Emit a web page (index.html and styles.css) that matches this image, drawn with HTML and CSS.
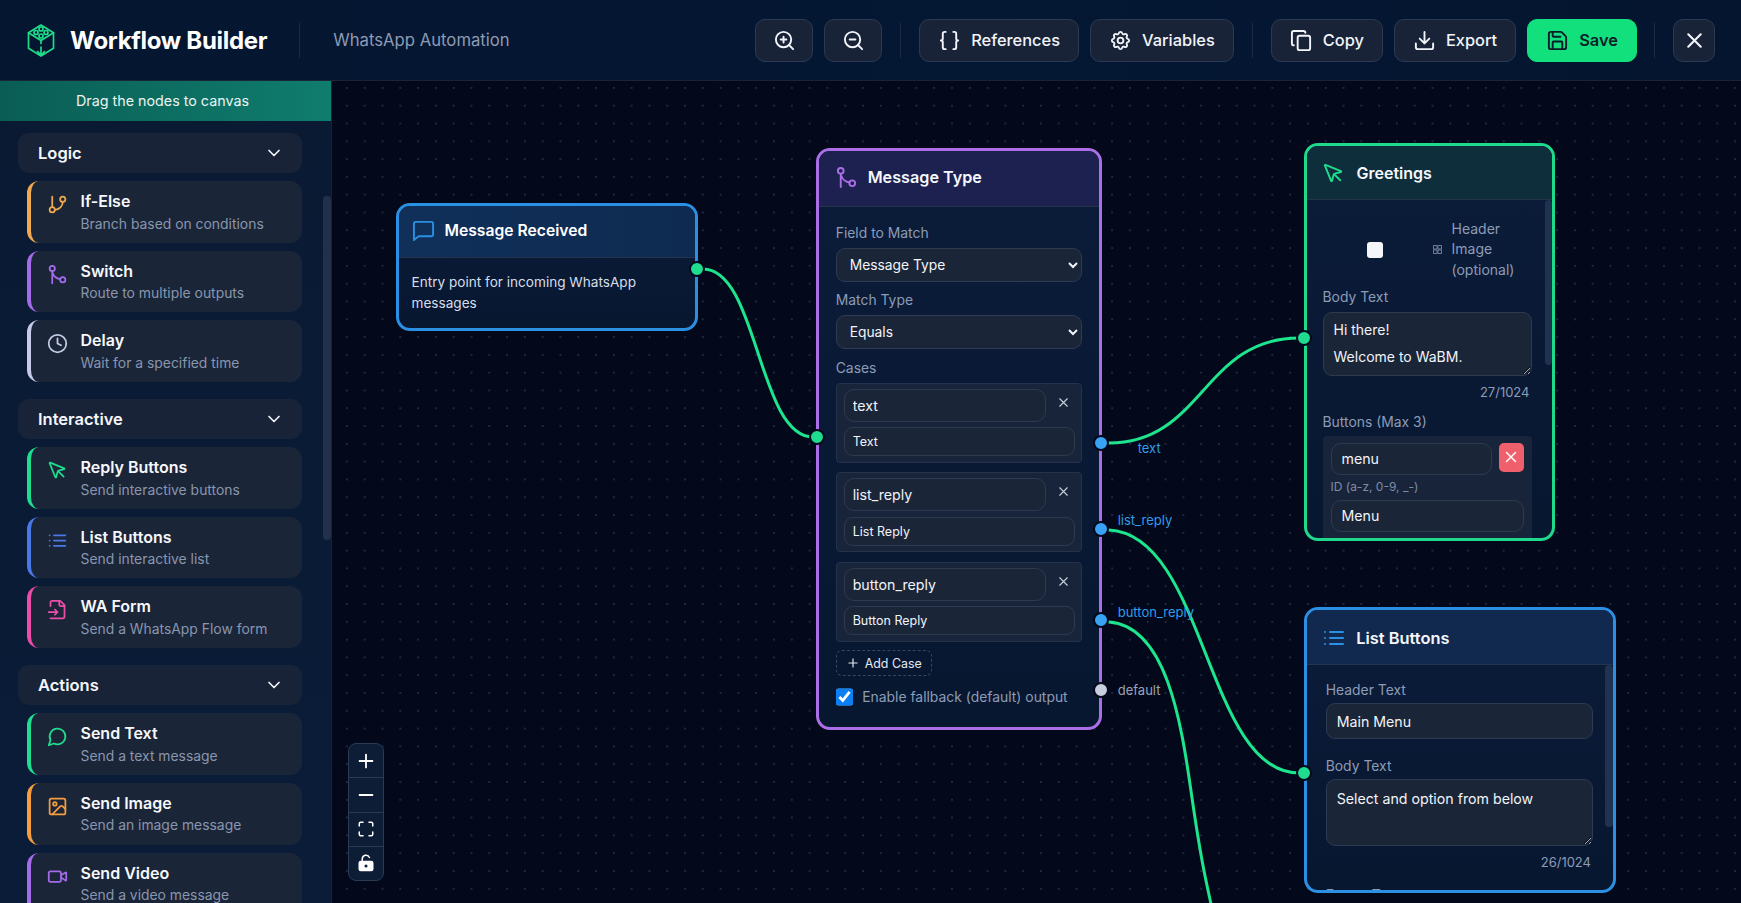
FILE: index.html
```html
<!DOCTYPE html>
<html lang="en">
<head>
  <meta charset="UTF-8">
  <meta name="viewport" content="width=device-width, initial-scale=1.0">
  <title>Workflow Builder</title>
  <link rel="stylesheet" href="styles.css">
</head>
<body>
  <svg class="sprite" xmlns="http://www.w3.org/2000/svg">
    <symbol id="i-zoom-in" viewBox="0 0 24 24"><circle cx="11" cy="11" r="8"/><path d="M21 21l-4.35-4.35M11 8v6M8 11h6"/></symbol>
    <symbol id="i-zoom-out" viewBox="0 0 24 24"><circle cx="11" cy="11" r="8"/><path d="M21 21l-4.35-4.35M8 11h6"/></symbol>
    <symbol id="i-braces" viewBox="0 0 24 24"><path d="M8 3H7a2 2 0 0 0-2 2v5a2 2 0 0 1-2 2 2 2 0 0 1 2 2v5c0 1.1.9 2 2 2h1"/><path d="M16 21h1a2 2 0 0 0 2-2v-5c0-1.1.9-2 2-2a2 2 0 0 1-2-2V5a2 2 0 0 0-2-2h-1"/></symbol>
    <symbol id="i-gear" viewBox="0 0 24 24"><path d="M10.325 4.317c.426-1.756 2.924-1.756 3.35 0a1.724 1.724 0 0 0 2.573 1.066c1.543-.94 3.31.826 2.37 2.37a1.724 1.724 0 0 0 1.065 2.572c1.756.426 1.756 2.924 0 3.35a1.724 1.724 0 0 0-1.066 2.573c.94 1.543-.826 3.31-2.37 2.37a1.724 1.724 0 0 0-2.572 1.065c-.426 1.756-2.924 1.756-3.35 0a1.724 1.724 0 0 0-2.573-1.066c-1.543.94-3.31-.826-2.37-2.37a1.724 1.724 0 0 0-1.065-2.572c-1.756-.426-1.756-2.924 0-3.35a1.724 1.724 0 0 0 1.066-2.573c-.94-1.543.826-3.31 2.37-2.37 1 .608 2.296.07 2.572-1.065z"/><circle cx="12" cy="12" r="3"/></symbol>
    <symbol id="i-copy" viewBox="0 0 24 24"><rect x="8" y="7" width="13" height="15" rx="2"/><path d="M4 17c-1.1 0-2-.9-2-2V4c0-1.1.9-2 2-2h10c1.1 0 2 .9 2 2"/></symbol>
    <symbol id="i-download" viewBox="0 0 24 24"><path d="M21 15v4a2 2 0 0 1-2 2H5a2 2 0 0 1-2-2v-4M7 10l5 5 5-5M12 15V3"/></symbol>
    <symbol id="i-save" viewBox="0 0 24 24"><path d="M15.2 3a2 2 0 0 1 1.4.6l3.8 3.8a2 2 0 0 1 .6 1.4V19a2 2 0 0 1-2 2H5a2 2 0 0 1-2-2V5a2 2 0 0 1 2-2z"/><path d="M17 21v-7a1 1 0 0 0-1-1H8a1 1 0 0 0-1 1v7M7 3v4a1 1 0 0 0 1 1h7"/></symbol>
    <symbol id="i-x" viewBox="0 0 24 24"><path d="M18 6 6 18M6 6l12 12"/></symbol>
    <symbol id="i-chevron" viewBox="0 0 24 24"><path d="m6 9 6 6 6-6"/></symbol>
    <symbol id="i-branch" viewBox="0 0 24 24"><path d="M6 3v12"/><circle cx="18" cy="6" r="3"/><circle cx="6" cy="18" r="3"/><path d="M18 9a9 9 0 0 1-9 9"/></symbol>
    <symbol id="i-switch" viewBox="0 0 24 24"><circle cx="6" cy="5" r="3"/><circle cx="18" cy="18" r="3"/><path d="M6 8v14M6.400 10c1 3.400 4.600 6.600 8.700 7.200"/></symbol>
    <symbol id="i-clock" viewBox="0 0 24 24"><circle cx="12" cy="12" r="10"/><path d="M12 6v6l4 2"/></symbol>
    <symbol id="i-pointer" viewBox="0 0 24 24"><path d="M12.586 12.586 19 19"/><path d="M3.688 3.037a.497.497 0 0 0-.651.651l6.5 15.999a.5.5 0 0 0 .947-.062l1.569-6.083a2 2 0 0 1 1.448-1.479l6.124-1.579a.5.5 0 0 0 .063-.947z"/></symbol>
    <symbol id="i-list" viewBox="0 0 24 24"><path d="M3 12h.01M3 18h.01M3 6h.01M8 12h13M8 18h13M8 6h13"/></symbol>
    <symbol id="i-form" viewBox="0 0 24 24"><path d="M4 22h14a2 2 0 0 0 2-2V7l-5-5H6a2 2 0 0 0-2 2v4"/><path d="M14 2v4a2 2 0 0 0 2 2h4M2 15h10M9 18l3-3-3-3"/></symbol>
    <symbol id="i-bubble" viewBox="0 0 24 24"><path d="M7.900 20A9 9 0 1 0 4 16.100L2 22Z"/></symbol>
    <symbol id="i-image" viewBox="0 0 24 24"><rect x="3" y="3" width="18" height="18" rx="2"/><circle cx="9" cy="9" r="2"/><path d="m21 15-3.086-3.086a2 2 0 0 0-2.828 0L6 21"/></symbol>
    <symbol id="i-video" viewBox="0 0 24 24"><path d="m16 13 5.223 3.482a.5.5 0 0 0 .777-.416V7.870a.5.5 0 0 0-.752-.432L16 10.500"/><rect x="2" y="6" width="14" height="12" rx="2"/></symbol>
    <symbol id="i-message" viewBox="0 0 24 24"><path d="M22 16a2 2 0 0 1-2 2H7l-5 4V5a2 2 0 0 1 2-2h16a2 2 0 0 1 2 2z"/></symbol>
    <symbol id="i-plus" viewBox="0 0 24 24"><path d="M5 12h14M12 5v14"/></symbol>
    <symbol id="i-minus" viewBox="0 0 24 24"><path d="M5 12h14"/></symbol>
    <symbol id="i-fit" viewBox="0 0 24 24"><path d="M8 3H5a2 2 0 0 0-2 2v3M21 8V5a2 2 0 0 0-2-2h-3M3 16v3a2 2 0 0 0 2 2h3M16 21h3a2 2 0 0 0 2-2v-3"/></symbol>
  </svg>

  <header class="topbar">
    <div class="brand">
      <svg class="logo" viewBox="0 0 28 33" fill="none" stroke="#1fdc8a" stroke-width="1.700" stroke-linejoin="round" stroke-linecap="round">
        <path d="M14 1l12.500 7.800L14 16.500 1.500 8.800z"/>
        <circle cx="14" cy="5" r="2"/><circle cx="9" cy="8.500" r="2"/><circle cx="19" cy="8.500" r="2"/><circle cx="14" cy="12" r="2"/>
        <path d="M1.500 8.800v15.400L14 32l12.500-7.800V8.800M14 16.500v3M14 23v9M10.500 27.500L14 31l3.500-3.500"/>
      </svg>
      <h1>Workflow Builder</h1>
    </div>
    <span class="bar-sep"></span>
    <span class="subtitle">WhatsApp Automation</span>
    <div class="actions">
      <button class="tool icon-only"><svg class="ico"><use href="#i-zoom-in"/></svg></button>
      <button class="tool icon-only"><svg class="ico"><use href="#i-zoom-out"/></svg></button>
      <span class="bar-sep"></span>
      <button class="tool"><svg class="ico"><use href="#i-braces"/></svg>References</button>
      <button class="tool"><svg class="ico"><use href="#i-gear"/></svg>Variables</button>
      <span class="bar-sep"></span>
      <button class="tool"><svg class="ico"><use href="#i-copy"/></svg>Copy</button>
      <button class="tool"><svg class="ico"><use href="#i-download"/></svg>Export</button>
      <button class="tool save"><svg class="ico"><use href="#i-save"/></svg>Save</button>
      <span class="bar-sep"></span>
      <button class="tool close"><svg class="ico"><use href="#i-x"/></svg></button>
    </div>
  </header>

  <main class="workspace">
    <aside class="sidebar">
      <div class="hint">Drag the nodes to canvas</div>
      <div class="palette">
        <section class="group">
          <div class="group-head">Logic<svg class="ico chev"><use href="#i-chevron"/></svg></div>
          <div class="item amber"><svg class="ico"><use href="#i-branch"/></svg><div><b>If-Else</b><small>Branch based on conditions</small></div></div>
          <div class="item purple"><svg class="ico"><use href="#i-switch"/></svg><div><b>Switch</b><small>Route to multiple outputs</small></div></div>
          <div class="item grey"><svg class="ico"><use href="#i-clock"/></svg><div><b>Delay</b><small>Wait for a specified time</small></div></div>
        </section>
        <section class="group">
          <div class="group-head">Interactive<svg class="ico chev"><use href="#i-chevron"/></svg></div>
          <div class="item green"><svg class="ico"><use href="#i-pointer"/></svg><div><b>Reply Buttons</b><small>Send interactive buttons</small></div></div>
          <div class="item blue"><svg class="ico"><use href="#i-list"/></svg><div><b>List Buttons</b><small>Send interactive list</small></div></div>
          <div class="item pink"><svg class="ico"><use href="#i-form"/></svg><div><b>WA Form</b><small>Send a WhatsApp Flow form</small></div></div>
        </section>
        <section class="group">
          <div class="group-head">Actions<svg class="ico chev"><use href="#i-chevron"/></svg></div>
          <div class="item green"><svg class="ico"><use href="#i-bubble"/></svg><div><b>Send Text</b><small>Send a text message</small></div></div>
          <div class="item orange"><svg class="ico"><use href="#i-image"/></svg><div><b>Send Image</b><small>Send an image message</small></div></div>
          <div class="item purple"><svg class="ico"><use href="#i-video"/></svg><div><b>Send Video</b><small>Send a video message</small></div></div>
        </section>
      </div>
      <span class="side-thumb"></span>
    </aside>

    <div class="canvas">
      <svg class="edges" width="1410" height="823" viewBox="331 80 1410 823" fill="none" stroke="#1de58d" stroke-width="3" stroke-linecap="round">
        <path d="M702 268C757 268 757 436 812 436"/>
        <path d="M1108 442C1202 442 1202 337 1298 337"/>
        <path d="M1108 529C1205 534 1205 772 1298 772"/>
        <path d="M1108 621C1165 625 1180 720 1190 790S1205 880 1212 912"/>
      </svg>

      <div class="zoom-box">
        <button><svg class="ico"><use href="#i-plus"/></svg></button>
        <button><svg class="ico"><use href="#i-minus"/></svg></button>
        <button><svg class="ico small"><use href="#i-fit"/></svg></button>
        <button>
          <svg class="ico small" viewBox="0 0 24 24"><path class="solid" d="M5 10h14a2 2 0 0 1 2 2v8a2 2 0 0 1-2 2H5a2 2 0 0 1-2-2v-8a2 2 0 0 1 2-2z"/><path d="M7 10V6.500a5 5 0 0 1 9.600-1.800"/><circle class="hole" cx="12" cy="16" r="2"/></svg>
        </button>
      </div>

      <article class="node node-received">
        <div class="node-head"><svg class="ico"><use href="#i-message"/></svg>Message Received</div>
        <p class="node-text">Entry point for incoming WhatsApp messages</p>
        <span class="handle h-green h-out"></span>
      </article>

      <article class="node node-type">
        <div class="node-head"><svg class="ico"><use href="#i-switch"/></svg>Message Type</div>
        <div class="node-body">
          <label class="field-label">Field to Match</label>
          <select class="ctl"><option>Message Type</option></select>
          <label class="field-label next">Match Type</label>
          <select class="ctl"><option>Equals</option></select>
          <label class="field-label next">Cases</label>
          <div class="case">
            <div class="case-top"><input class="ctl key" value="text"><svg class="ico rm"><use href="#i-x"/></svg></div>
            <input class="ctl name" value="Text">
          </div>
          <div class="case">
            <div class="case-top"><input class="ctl key" value="list_reply"><svg class="ico rm"><use href="#i-x"/></svg></div>
            <input class="ctl name" value="List Reply">
          </div>
          <div class="case">
            <div class="case-top"><input class="ctl key" value="button_reply"><svg class="ico rm"><use href="#i-x"/></svg></div>
            <input class="ctl name" value="Button Reply">
          </div>
          <button class="add-case"><svg class="ico"><use href="#i-plus"/></svg>Add Case</button>
          <label class="fallback"><input type="checkbox" checked>Enable fallback (default) output</label>
        </div>
        <span class="handle h-green h-in in-type"></span>
        <span class="handle h-blue h-out out-text"></span>
        <span class="handle h-blue h-out out-list"></span>
        <span class="handle h-blue h-out out-button"></span>
        <span class="handle h-grey h-out out-default"></span>
        <span class="out-label l-text">text</span>
        <span class="out-label l-list">list_reply</span>
        <span class="out-label l-button">button_reply</span>
        <span class="out-label l-default">default</span>
      </article>

      <article class="node node-greet">
        <div class="node-head"><svg class="ico"><use href="#i-pointer"/></svg>Greetings</div>
        <div class="node-body">
          <div class="header-img">
            <span class="white-box"></span>
            <svg class="broken" viewBox="0 0 10 10"><path d="M.5.500h4v4h-4zM5.500.500h4v4h-4zM.5 5.500h4v4h-4zM5.500 5.500h4v4h-4z"/></svg>
            <span>Header Image (optional)</span>
          </div>
          <label class="field-label">Body Text</label>
          <textarea class="ctl area">Hi there!

Welcome to WaBM.</textarea>
          <div class="count">27/1024</div>
          <label class="field-label btns">Buttons (Max 3)</label>
          <div class="btn-case">
            <div class="case-top"><input class="ctl btn-id" value="menu"><button class="del"><svg class="ico"><use href="#i-x"/></svg></button></div>
            <div class="id-hint">ID (a-z, 0-9, _-)</div>
            <input class="ctl btn-name" value="Menu">
          </div>
        </div>
        <span class="node-thumb"></span>
        <span class="handle h-green h-in in-greet"></span>
      </article>

      <article class="node node-list">
        <div class="node-head"><svg class="ico"><use href="#i-list"/></svg>List Buttons</div>
        <div class="node-body">
          <label class="field-label">Header Text</label>
          <input class="ctl wide" value="Main Menu">
          <label class="field-label second">Body Text</label>
          <textarea class="ctl area tall">Select and option from below</textarea>
          <div class="count">26/1024</div>
          <label class="field-label cut">Footer Text</label>
        </div>
        <span class="node-thumb"></span>
        <span class="handle h-green h-in in-list"></span>
      </article>
    </div>
  </main>
</body>
</html>
```

FILE: styles.css
```css
* {
  box-sizing: border-box;
}
html, body {
  height: 100%;
}
body {
  margin: 0;
  overflow: hidden;
  display: flex;
  flex-direction: column;
  background: #03081a;
  color: #fff;
  font-family: Inter, "Noto Sans", sans-serif;
  color-scheme: dark;
}
.sprite {
  display: none;
}
.ico {
  width: 20px;
  height: 20px;
  flex: none;
  fill: none;
  stroke: currentColor;
  stroke-width: 2;
  stroke-linecap: round;
  stroke-linejoin: round;
}

/* top bar */
.topbar {
  height: 81px;
  flex: none;
  display: flex;
  align-items: center;
  padding: 0 26px 0 27px;
  background: linear-gradient(90deg, #051630, #041733 60%, #05152f);
  border-bottom: 1px solid #1a2638;
}
.brand {
  display: flex;
  align-items: center;
  gap: 15px;
}
.logo {
  width: 28px;
  height: 33px;
}
.brand h1 {
  margin: 0;
  padding-top: 1px;
  font-size: 24px;
  font-weight: 700;
  letter-spacing: -0.3px;
}
.bar-sep {
  width: 1px;
  height: 35px;
  background: #1d2b42;
  flex: none;
}
.brand + .bar-sep {
  margin: 0 33px 0 32px;
}
.subtitle {
  font-size: 16.700px;
  color: #8d9bb5;
}
.actions {
  margin-left: auto;
  display: flex;
  align-items: center;
  gap: 11px;
}
.actions .bar-sep {
  margin: 0 7px;
}
.actions .bar-sep:nth-last-child(2) {
  margin: 0 7px 0 6px;
}
.tool {
  height: 43px;
  display: flex;
  align-items: center;
  gap: 10px;
  padding: 0 18px;
  background: #182338;
  border: 1px solid #2b3a52;
  border-radius: 10px;
  color: #f1f4f9;
  font: 500 16.400px Inter, sans-serif;
}
.tool .ico {
  width: 23px;
  height: 23px;
}
.tool.icon-only {
  width: 58px;
  padding: 0;
  justify-content: center;
}
.tool.save {
  background: #12e07c;
  border-color: #12e07c;
  color: #0b1d2a;
  font-weight: 600;
}
.tool.close {
  width: 42px;
  padding: 0;
  justify-content: center;
}
.tool.close .ico {
  width: 25px;
  height: 25px;
}

/* sidebar */
.workspace {
  flex: 1;
  min-height: 0;
  display: flex;
}
.sidebar {
  position: relative;
  width: 332px;
  flex: none;
  overflow: hidden;
  background: linear-gradient(180deg, #0a1a33, #0a1c38);
  border-right: 1px solid #14233a;
}
.hint {
  height: 40px;
  display: flex;
  align-items: center;
  justify-content: center;
  padding: 0 6px 2px 0;
  background: linear-gradient(90deg, #0a5d54, #0f7d6e);
  font-size: 14.300px;
  color: #eaf3f2;
}
.palette {
  padding: 12px 29px 0 18px;
}
.side-thumb {
  position: absolute;
  top: 115px;
  right: 0;
  width: 8px;
  height: 344px;
  border-radius: 4px;
  background: #22304a;
}
.group {
  margin-bottom: 17px;
}
.group-head {
  height: 40px;
  display: flex;
  align-items: center;
  justify-content: space-between;
  padding: 0 18px 0 20px;
  border-radius: 11px;
  background: #182338;
  font-size: 16.500px;
  font-weight: 600;
  color: #f4f6fa;
}
.chev {
  width: 20px;
  height: 20px;
}
.item {
  height: 61.700px;
  margin: 8px 0 0 9px;
  display: flex;
  gap: 12.500px;
  padding: 11px 10px 0 16px;
  border-left: 4px solid;
  border-radius: 12px;
  background: #1b2538;
}
.item .ico {
  margin-top: 2px;
  width: 21px;
  height: 21px;
}
.item b {
  display: block;
  font-size: 16px;
  font-weight: 600;
  line-height: 19px;
  color: #f6f8fb;
}
.item small {
  display: block;
  margin-top: 4.500px;
  font-size: 13.900px;
  line-height: 17px;
  color: #8896ae;
}
.amber { border-color: #f0a94e; }
.amber .ico { color: #f0a94e; }
.purple { border-color: #a46be8; }
.purple .ico { color: #a46be8; }
.grey { border-color: #c5cbe6; }
.grey .ico { color: #c5cbe6; }
.green { border-color: #1fdc8e; }
.green .ico { color: #1fdc8e; }
.blue { border-color: #4b78e6; }
.blue .ico { color: #4b78e6; }
.pink { border-color: #ec4da8; }
.pink .ico { color: #ec4da8; }
.orange { border-color: #f59e3f; }
.orange .ico { color: #f59e3f; }

/* canvas */
.canvas {
  position: relative;
  flex: 1;
  overflow: hidden;
  background-color: #03081a;
  background-image: radial-gradient(circle, #1c2840 0.8px, transparent 1.200px);
  background-size: 17.800px 17.800px;
  background-position: 6px -2px;
}
.edges {
  position: absolute;
  left: 0;
  top: 0;
}
.zoom-box {
  position: absolute;
  left: 16px;
  top: 662px;
  width: 36px;
  height: 138px;
  display: flex;
  flex-direction: column;
  border: 1px solid #2b3a52;
  border-radius: 8px;
  overflow: hidden;
  background: #0e1d36;
}
.zoom-box button {
  flex: 1;
  display: flex;
  align-items: center;
  justify-content: center;
  padding: 0;
  background: none;
  border: 0;
  border-bottom: 1px solid #2b3a52;
  color: #fff;
}
.zoom-box button:last-child {
  border-bottom: 0;
}
.zoom-box .ico {
  width: 22px;
  height: 22px;
}
.zoom-box .ico.small {
  width: 18px;
  height: 18px;
}
.zoom-box .solid {
  fill: #fff;
  stroke: #fff;
}
.zoom-box .hole {
  fill: #0e1d36;
  stroke: none;
}

/* nodes */
.node {
  position: absolute;
  border: 3px solid;
  border-radius: 14px;
  background: linear-gradient(180deg, #0b1c3a, #081730);
}
.node-head {
  display: flex;
  align-items: center;
  gap: 12px;
  padding-left: 14px;
  border-bottom: 1px solid #24344d;
  border-radius: 11px 11px 0 0;
  font-size: 16px;
  font-weight: 600;
  color: #f5f7fb;
}
.node-head .ico {
  width: 23px;
  height: 23px;
}
.node-received {
  left: 63.500px;
  top: 122px;
  width: 302px;
  height: 128px;
  border-color: #2b8fe3;
}
.node-received .node-head {
  height: 52px;
  padding: 0 0 3px 13px;
  gap: 10px;
  font-size: 15.700px;
  color: #fff;
  background: linear-gradient(90deg, #10305a, #0e2a50);
}
.node-received .node-head .ico {
  color: #2b8fe3;
}
.node-text {
  margin: 14px 13px 0;
  font-size: 13.600px;
  line-height: 21px;
  color: #d7deea;
}
.node-type {
  left: 483.700px;
  top: 66.500px;
  width: 286px;
  height: 582px;
  border-color: #aa6fe6;
}
.node-type .node-head {
  height: 56px;
  padding: 0 0 2px 16px;
  gap: 10px;
  font-size: 16.200px;
  background: #1c2150;
}
.node-type .node-head .ico {
  color: #aa6fe6;
}
.node-body {
  padding: 18px 17px 0;
}
.field-label {
  display: block;
  margin-bottom: 6px;
  font-size: 13.900px;
  line-height: 17px;
  color: #8d9cb6;
}
.field-label.next {
  margin-top: 10.500px;
}
.ctl {
  display: block;
  width: 100%;
  height: 34px;
  padding: 0 10px;
  background: #1b2538;
  border: 1px solid #2d3a50;
  border-radius: 9px;
  color: #f1f4f9;
  font: 14.200px Inter, sans-serif;
  outline: none;
}
select.ctl {
  padding-left: 9px;
  font-size: 13.800px;
}
.case {
  height: 80px;
  margin-bottom: 9.500px;
  padding: 5px 7px;
  background: #18243a;
  border: 1px solid #253249;
  border-radius: 4px;
}
.case-top {
  display: flex;
  align-items: flex-start;
}
.ctl.key {
  width: 202px;
  height: 33px;
  border-radius: 10px;
  padding: 0 8px;
}
.rm {
  width: 15px;
  height: 15px;
  margin: 6px 0 0 10px;
  stroke-width: 1.800;
  color: #c8d0de;
}
.ctl.name {
  width: 231px;
  height: 29px;
  margin-top: 5.500px;
  padding: 0 8px;
  font-size: 12.500px;
}
.add-case {
  display: flex;
  align-items: center;
  gap: 5px;
  height: 26px;
  margin-top: -0.700px;
  padding: 0 9px;
  background: transparent;
  border: 1px dashed #364560;
  border-radius: 6px;
  color: #e4e9f1;
  font: 12.400px Inter, sans-serif;
}
.add-case .ico {
  width: 14px;
  height: 14px;
}
.fallback {
  display: flex;
  align-items: center;
  gap: 9px;
  margin-top: 12px;
  font-size: 13.900px;
  color: #8d9cb6;
}
.fallback input {
  width: 17.500px;
  height: 17.500px;
  margin: 0;
  accent-color: #0b80f5;
}

/* connection handles */
.handle {
  position: absolute;
  box-sizing: content-box;
  width: 12px;
  height: 12px;
  border-radius: 50%;
  border: 2px solid #04091c;
}
.h-green { background: #1fdc8e; }
.h-blue { background: #38a2f5; }
.h-grey { background: #c8cde0; }
.node-received .h-out {
  right: -10px;
  top: 55px;
}
.in-type {
  left: -10px;
  top: 278px;
}
.h-out.out-text { right: -10px; top: 284px; }
.h-out.out-list { right: -10px; top: 370px; }
.h-out.out-button { right: -10px; top: 461px; }
.h-out.out-default { right: -10px; top: 531px; }
.out-label {
  position: absolute;
  font-size: 13px;
  color: #2f9de8;
}
.l-text { left: 319px; top: 289px; }
.l-list { left: 299px; top: 361px; }
.l-button { left: 299px; top: 453px; }
.l-default { left: 299px; top: 531px; color: #9aa3b6; }

.node-greet {
  left: 971.500px;
  top: 61.500px;
  width: 251px;
  height: 398px;
  border-color: #1fd98c;
}
.node-greet .node-head {
  height: 54px;
  padding: 2px 0 0 15px;
  gap: 12px;
  background: #0e2e3c;
}
.node-greet .node-head .ico {
  color: #1fdc8e;
}
.node-greet .node-body {
  height: 338px;
  padding: 18px 20px 0 16px;
  overflow: hidden;
  border-radius: 0 0 11px 11px;
}
.node-thumb {
  position: absolute;
  right: 0;
  width: 7px;
  border-radius: 4px;
  background: #1f3350;
}
.node-greet .node-thumb {
  top: 54px;
  height: 165px;
}
.header-img {
  height: 64px;
  display: flex;
  align-items: center;
  margin-bottom: 7px;
  font-size: 14px;
  line-height: 20.500px;
  color: #8d9cb6;
}
.white-box {
  width: 16px;
  height: 16px;
  margin-left: 44px;
  border-radius: 3px;
  background: #f4f6f9;
}
.broken {
  width: 9px;
  height: 9px;
  margin: 0 10px 0 50px;
  fill: none;
  stroke: #7f8da6;
  stroke-width: 1;
}
.header-img span:last-child {
  width: 75px;
}
.node-greet .field-label {
  margin-bottom: 6px;
}
.area {
  height: 64.500px;
  margin-top: 0.500px;
  padding: 10.500px 10px 6px;
  line-height: 13.500px;
  font-size: 14px;
  resize: vertical;
}
.count {
  margin: 8px 2px 0 0;
  text-align: right;
  font-size: 13px;
  line-height: 16px;
  color: #8d9cb6;
}
.field-label.btns {
  margin-top: 13.700px;
}
.node-greet .field-label.btns {
  margin-bottom: 5px;
}
.btn-case {
  padding: 7px 8px;
  background: #18243a;
  border-radius: 4px;
  height: 120px;
}
.ctl.btn-id {
  width: 161px;
  height: 32px;
  padding: 0 10px;
  border-radius: 10px;
}
.del {
  width: 28px;
  height: 29px;
  margin-left: 7px;
  display: flex;
  align-items: center;
  justify-content: center;
  padding: 0;
  background: #f0606c;
  border: 0;
  border-radius: 5px;
  color: #fff;
}
.del .ico {
  width: 18px;
  height: 18px;
}
.id-hint {
  margin: 4.500px 0 5.500px;
  font-size: 12px;
  line-height: 15px;
  color: #7f8da6;
}
.ctl.btn-name {
  width: 193px;
  height: 32px;
  padding: 0 10px;
  border-radius: 10px;
}
.in-greet {
  left: -11px;
  top: 184px;
}

.node-list {
  left: 972px;
  top: 526.300px;
  width: 312px;
  height: 285.500px;
  border-color: #2b8fe3;
}
.node-list .node-head {
  height: 55px;
  padding: 2px 0 0 14.700px;
  gap: 10.600px;
  font-size: 16.400px;
  background: #12294f;
}
.node-list .node-head .ico {
  width: 24px;
  height: 24px;
  color: #2b8fe3;
}
.node-list .node-body {
  height: 224.500px;
  padding: 17px 20px 0 18.700px;
  overflow: hidden;
  border-radius: 0 0 11px 11px;
}
.node-list .field-label {
  margin-bottom: 4px;
}
.node-list .node-thumb {
  top: 55px;
  height: 162px;
  right: 0;
  width: 8px;
}
.ctl.wide {
  height: 36px;
  padding-left: 10px;
}
.field-label.second {
  margin-top: 18.500px;
}
.area.tall {
  height: 67px;
  margin-top: 0.500px;
  padding-top: 10px;
  line-height: 18px;
  font-size: 14.200px;
}
.field-label.cut {
  margin-top: 17px;
}
.in-list {
  left: -11px;
  top: 155px;
}
```
